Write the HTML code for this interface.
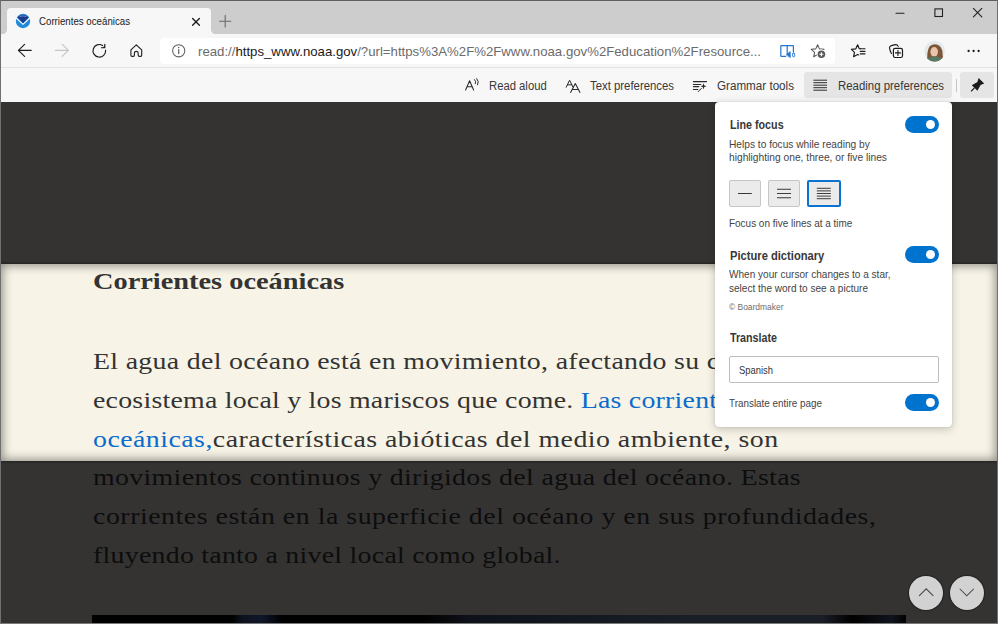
<!DOCTYPE html>
<html><head><meta charset="utf-8">
<style>
*{box-sizing:border-box;margin:0;padding:0}
html,body{width:998px;height:624px;overflow:hidden;background:#cccccc;font-family:"Liberation Sans",sans-serif}
.a{position:absolute}
.t{position:absolute;white-space:nowrap;transform-origin:0 0}
#frame{position:absolute;left:0;top:0;width:998px;height:624px;border:1px solid #5f5f5f;border-left-color:#707070;border-right-color:#707070;border-bottom-color:#7a7a7a;z-index:50}
#tabstrip{left:1px;top:1px;width:996px;height:33px;background:#cdcdcd}
#tab{left:7px;top:8px;width:204px;height:27px;background:#f7f7f7;border-radius:4px 4px 0 0}
#toolbar{left:1px;top:34px;width:996px;height:34px;background:#f7f7f7}
#addr{left:160px;top:38px;width:675px;height:26px;background:#fff;border-radius:4px}
#sep1{left:1px;top:67px;width:996px;height:1px;background:#e3e3e3}
#readbar{left:1px;top:68px;width:996px;height:34px;background:#f7f7f7}
#rpsel{left:804px;top:72px;width:148px;height:26px;background:#e5e5e5;border-radius:3px}
#pinsel{left:960px;top:72px;width:34px;height:26px;background:#e5e5e5;border-radius:3px}
#vsep{left:956px;top:79px;width:1px;height:13px;background:#c4c4c4}
#content{left:1px;top:102px;width:996px;height:521px;background:#f7f3e6}
.dim{position:absolute;left:1px;width:996px;background:rgba(4,4,5,0.805)}
#band{left:1px;top:264px;width:996px;height:197px;box-shadow:inset 0 0 10px 2px rgba(0,0,0,0.40),0 0 2px 1px rgba(0,0,0,0.35)}
#panel{left:715px;top:102px;width:237px;height:325px;background:#fff;border-radius:4px;box-shadow:0 0 1px rgba(0,0,0,0.25),0 2px 9px rgba(0,0,0,0.22)}
.toggle{position:absolute;width:34px;height:17px;border-radius:9px;background:#0073cf}
.toggle:after{content:"";position:absolute;left:21px;top:4px;width:9px;height:9px;border-radius:50%;background:#fff}
.lfbtn{position:absolute;top:180px;width:32px;height:27px;background:#ebebeb;border:1px solid #c6c6c6;border-radius:2px}
.circ{position:absolute;top:575.7px;width:34px;height:34px;border-radius:50%;background:#d2d2d2;box-shadow:0 0 1px 1px rgba(0,0,0,0.35)}
</style></head><body>
<div class="a" id="tabstrip"></div>
<div class="a" id="tab"></div>
<div class="a" style="left:3px;top:30px;width:4px;height:4px;background:radial-gradient(circle at 0 0,#cdcdcd 3.5px,#f7f7f7 4.2px)"></div>
<div class="a" style="left:211px;top:30px;width:4px;height:4px;background:radial-gradient(circle at 100% 0,#cdcdcd 3.5px,#f7f7f7 4.2px)"></div>
<div class="a" id="toolbar"></div>
<div class="a" id="addr"></div>
<div class="a" id="sep1"></div>
<div class="a" id="readbar"></div>
<div class="a" id="rpsel"></div>
<div class="a" id="pinsel"></div>
<div class="a" id="vsep"></div>
<svg class="a" style="left:0;top:0" width="998" height="102" viewBox="0 0 998 102" fill="none" stroke-linecap="round" stroke-linejoin="round">
<!-- NOAA logo -->
<circle cx="23" cy="21" r="7.2" fill="#1f8bdb"/>
<path d="M17.4 17.2 Q23 12.2 28.6 17.2 L23 23.4 Z" fill="#1c3b8e"/>
<path d="M16.3 18 L23 24.3 L29.7 18" stroke="#fff" stroke-width="1.05"/>
<path d="M20 16.4 Q23 15.3 26 16.4" stroke="#7f98d0" stroke-width="0.8"/>
<!-- tab close -->
<path d="M192.6 18.4 L199.4 25.2 M199.4 18.4 L192.6 25.2" stroke="#1c1c1c" stroke-width="1.35"/>
<!-- new tab plus -->
<path d="M219.6 21.2 H230.8 M225.2 15.4 V27" stroke="#6a6a6a" stroke-width="1.1"/>
<!-- window controls -->
<path d="M896 13.3 H904" stroke="#222" stroke-width="1.1"/>
<rect x="934.9" y="8.9" width="7.6" height="7.6" stroke="#222" stroke-width="1.1" stroke-linejoin="miter"/>
<path d="M973.4 8.4 L981.8 16.8 M981.8 8.4 L973.4 16.8" stroke="#222" stroke-width="1.1"/>
<!-- back / forward -->
<path d="M31.2 50.4 H18.4 M24.6 44.3 L18.4 50.4 L24.6 56.4" stroke="#1b1b1b" stroke-width="1.15"/>
<path d="M55.4 50.4 H68.4 M62.2 44.3 L68.4 50.4 L62.2 56.4" stroke="#c6c6c6" stroke-width="1.15"/>
<!-- reload -->
<path d="M105.6 50.2 A6.3 6.3 0 1 1 102.6 45.4" stroke="#1b1b1b" stroke-width="1.15"/>
<path d="M101.4 47.7 H104.8 V44.3" stroke="#1b1b1b" stroke-width="1.15"/>
<path d="M104.8 45.6 V47.7 H102.6 Z" fill="#1b1b1b"/>
<!-- home -->
<path d="M130.9 49.8 L136.3 44.8 L141.7 49.8 V55.2 Q141.7 56.3 140.6 56.3 H139.3 Q138.2 56.3 138.2 55.2 V53.2 A1.9 1.9 0 0 0 134.4 53.2 V55.2 Q134.4 56.3 133.3 56.3 H132 Q130.9 56.3 130.9 55.2 Z" stroke="#222" stroke-width="1.15"/>
<!-- info -->
<circle cx="178.7" cy="50.75" r="6.1" stroke="#5f5f5f" stroke-width="1.05"/>
<path d="M178.7 49.7 V53.6" stroke="#5f5f5f" stroke-width="1.2"/>
<circle cx="178.7" cy="47.6" r="0.75" fill="#5f5f5f"/>
<!-- immersive reader -->
<path d="M786.6 45.6 H781.4 Q780.8 45.6 780.8 46.2 V55.8 Q780.8 56.4 781.4 56.4 H785.6" stroke="#1f74d4" stroke-width="1.2"/>
<path d="M787.2 45.6 V53.4 M787.2 45.6 H792.8 Q793.4 45.6 793.4 46.2 V51.6" stroke="#1f74d4" stroke-width="1.2"/>
<path d="M786.4 54.6 L790.3 51.6 V57.4 Z" fill="#1f74d4" stroke="#1f74d4" stroke-width="0.6"/>
<rect x="792.5" y="52.9" width="2.2" height="4" rx="1.1" stroke="#1f74d4" stroke-width="0.9"/>
<!-- star plus -->
<path d="M817.60 44.70 L819.42 48.89 L823.97 49.33 L820.55 52.36 L821.54 56.82 L817.60 54.50 L813.66 56.82 L814.65 52.36 L811.23 49.33 L815.78 48.89 Z" stroke="#5a5a5a" stroke-width="1.05"/>
<circle cx="821.4" cy="54.3" r="4.8" fill="#fff"/>
<circle cx="821.4" cy="54.3" r="3.8" fill="#5a5a5a"/>
<path d="M821.4 52.3 V56.3 M819.4 54.3 H823.4" stroke="#fff" stroke-width="1.1" stroke-linecap="butt"/>
<!-- favorites -->
<path d="M860.4 48.7 L859.3 48.8 L857.6 44.8 L855.7 48.9 L851.4 49.4 L854.5 52.4 L853.6 56.7 L857.5 54.4 L858.7 55" stroke="#1b1b1b" stroke-width="1.15"/>
<path d="M860.6 48.7 H865 M860.3 51.4 H865 M860.3 53.8 H865" stroke="#1b1b1b" stroke-width="1.15"/>
<!-- collections -->
<path d="M891.4 53.6 Q889.7 50.2 889.5 47.8 Q889.4 46.5 890.7 45.9 Q893.2 44.9 895.6 44.6 Q897.4 44.4 898.2 46.4" stroke="#1b1b1b" stroke-width="1.15"/>
<rect x="893.4" y="48.3" width="9.1" height="9.2" rx="1.8" stroke="#1b1b1b" stroke-width="1.2"/>
<path d="M897.95 50.4 V55.4 M895.4 52.9 H900.5" stroke="#1b1b1b" stroke-width="1.1"/>
<!-- avatar -->
<defs><clipPath id="av"><circle cx="934.6" cy="51.1" r="10.4"/></clipPath></defs>
<g clip-path="url(#av)">
<rect x="924" y="40" width="22" height="22" fill="#e4eaec"/>
<path d="M927.5 62 Q926.5 51 929.5 46.5 Q934 42.6 939 45.6 Q943 49 942.6 55 Q943 59 945 62 Z" fill="#7d5538"/>
<ellipse cx="934.2" cy="51.8" rx="3.8" ry="4.8" fill="#e9c3aa"/>
<path d="M924.5 62 Q927 56.2 934.4 56.4 Q941.5 56.4 944.6 62 Z" fill="#547a66"/>
</g>
<!-- more -->
<circle cx="968.6" cy="51" r="1.15" fill="#1b1b1b"/>
<circle cx="973.6" cy="51" r="1.15" fill="#1b1b1b"/>
<circle cx="978.6" cy="51" r="1.15" fill="#1b1b1b"/>
<!-- read aloud icon -->
<path d="M465.6 90 L469.6 80.8 L473.6 90 M467 86.8 H472.2" stroke="#2a2a2a" stroke-width="1.05"/>
<path d="M474.6 79.6 Q476.4 81.4 475.4 83.6 M476.8 78.6 Q479.4 81.6 477.6 84.8" stroke="#2a2a2a" stroke-width="1"/>
<!-- text prefs icon -->
<path d="M566.2 87.2 L569.6 80.2 L573 87.2 M567.4 84.8 H571.8" stroke="#2a2a2a" stroke-width="1"/>
<path d="M570.6 92.4 L575.3 83.6 L580 92.4 M572.2 89.4 H578.4" stroke="#2a2a2a" stroke-width="1.05"/>
<!-- grammar icon -->
<path d="M693.4 81.6 H706.6 M693.4 84.4 H700.8 M693.4 86.6 H698.8 M693.4 89.4 H697.8" stroke="#2a2a2a" stroke-width="1.05"/>
<path d="M703.5 83.2 L704.3 85.5 L706.6 86.3 L704.3 87.1 L703.5 89.4 L702.7 87.1 L700.4 86.3 L702.7 85.5 Z" fill="#2a2a2a"/>
<path d="M698.2 91.6 L701.4 88.4" stroke="#2a2a2a" stroke-width="1"/>
<!-- reading prefs icon -->
<path d="M813.4 80.2 H827 M813.4 82.7 H827 M813.4 85.2 H827 M813.4 87.7 H827 M813.4 90.2 H827" stroke="#2e2e2e" stroke-width="1" stroke-linecap="butt"/>
<!-- pin -->
<path d="M978.6 78 L984.2 83.6 L980.6 85 L977.4 90.8 L971.8 85.2 L977.4 82 Z" fill="#1b1b1b"/>
<path d="M974.2 88.2 L971.4 91" stroke="#1b1b1b" stroke-width="1.1"/>
</svg>

<div class="t" style="left:38.70px;top:15.59px;font-family:'Liberation Sans',sans-serif;font-weight:400;font-size:11px;line-height:11px;color:#1a1a1a;letter-spacing:0px;transform:scaleX(0.8806);">Corrientes oceánicas</div>
<div class="t" style="left:198.00px;top:45.00px;font-family:'Liberation Sans',sans-serif;font-weight:400;font-size:13px;line-height:13px;color:#6b6b6b;letter-spacing:0px;transform:scaleX(1.0151);"><span style="color:#6b6b6b">read://</span><span style="color:#1a1a1a">https_www.noaa.gov</span><span style="color:#6b6b6b">/?url=https%3A%2F%2Fwww.noaa.gov%2Feducation%2Fresource...</span></div>
<div class="t" style="left:489.10px;top:79.54px;font-family:'Liberation Sans',sans-serif;font-weight:400;font-size:12px;line-height:12px;color:#383838;letter-spacing:0px;transform:scaleX(0.9399);">Read aloud</div>
<div class="t" style="left:590.10px;top:79.54px;font-family:'Liberation Sans',sans-serif;font-weight:400;font-size:12px;line-height:12px;color:#383838;letter-spacing:0px;transform:scaleX(0.9468);">Text preferences</div>
<div class="t" style="left:717.00px;top:79.54px;font-family:'Liberation Sans',sans-serif;font-weight:400;font-size:12px;line-height:12px;color:#383838;letter-spacing:0px;transform:scaleX(0.9703);">Grammar tools</div>
<div class="t" style="left:837.60px;top:79.54px;font-family:'Liberation Sans',sans-serif;font-weight:400;font-size:12px;line-height:12px;color:#383838;letter-spacing:0px;transform:scaleX(0.9515);">Reading preferences</div>
<div class="a" id="content"></div>
<div class="t" style="left:93.00px;top:269.10px;font-family:'Liberation Serif',serif;font-weight:700;font-size:24px;line-height:24px;color:#333333;letter-spacing:0px;transform:scaleX(1.1815);">Corrientes oceánicas</div>
<div class="t" style="left:93.00px;top:348.80px;font-family:'Liberation Serif',serif;font-weight:400;font-size:24px;line-height:24px;color:#333333;letter-spacing:0.282px;transform:scaleX(1.0000);transform:scaleX(1.16)">El agua del océano está en movimiento, afectando su clima, su</div>
<div class="t" style="left:93.00px;top:387.65px;font-family:'Liberation Serif',serif;font-weight:400;font-size:24px;line-height:24px;color:#333333;letter-spacing:0.204px;transform:scaleX(1.0000);transform:scaleX(1.16)">ecosistema local y los mariscos que come. <span style="color:#0a6ccc">Las corrientes</span></div>
<div class="t" style="left:93.00px;top:426.50px;font-family:'Liberation Serif',serif;font-weight:400;font-size:24px;line-height:24px;color:#333333;letter-spacing:0.405px;transform:scaleX(1.0000);transform:scaleX(1.16)"><span style="color:#0a6ccc">oceánicas,</span>características abióticas del medio ambiente, son</div>
<div class="t" style="left:93.00px;top:465.35px;font-family:'Liberation Serif',serif;font-weight:400;font-size:24px;line-height:24px;color:#333333;letter-spacing:0.297px;transform:scaleX(1.0000);transform:scaleX(1.16)">movimientos continuos y dirigidos del agua del océano. Estas</div>
<div class="t" style="left:93.00px;top:504.20px;font-family:'Liberation Serif',serif;font-weight:400;font-size:24px;line-height:24px;color:#333333;letter-spacing:0.455px;transform:scaleX(1.0000);transform:scaleX(1.16)">corrientes están en la superficie del océano y en sus profundidades,</div>
<div class="t" style="left:93.00px;top:543.05px;font-family:'Liberation Serif',serif;font-weight:400;font-size:24px;line-height:24px;color:#333333;letter-spacing:0.228px;transform:scaleX(1.0000);transform:scaleX(1.16)">fluyendo tanto a nivel local como global.</div>
<div class="dim" style="top:102px;height:162px"></div>
<div class="dim" style="top:461px;height:162px"></div>
<div class="a" id="band"></div>
<div class="a" id="img" style="left:92px;top:615px;width:814px;height:8px;background:linear-gradient(90deg,#000 0,#000 140px,#0d1220 150px,#101729 170px,#000 190px,#000 330px,#0e121a 380px,#1a1e27 600px,#1a1e27 730px,#000 760px,#10141c 800px,#000 814px)"></div>
<div class="circ" style="left:909px"></div>
<div class="circ" style="left:950px"></div>
<div class="a" id="panel"></div>
<div class="toggle" style="left:905px;top:116px"></div>
<div class="toggle" style="left:905px;top:246px"></div>
<div class="toggle" style="left:905px;top:394px"></div>
<div class="lfbtn" style="left:729px"></div>
<div class="lfbtn" style="left:768px"></div>
<div class="lfbtn" style="left:807px;width:34px;border:2px solid #0a72d1"></div>
<div class="a" style="left:729px;top:356px;width:210px;height:27px;border:1px solid #bdbdbd;border-radius:2px;background:#fff"></div>
<div class="t" style="left:729.50px;top:119.12px;font-family:'Liberation Sans',sans-serif;font-weight:700;font-size:12.5px;line-height:12.5px;color:#383838;letter-spacing:0px;transform:scaleX(0.8574);">Line focus</div>
<div class="t" style="left:729.00px;top:139.11px;font-family:'Liberation Sans',sans-serif;font-weight:400;font-size:10.5px;line-height:10.5px;color:#444444;letter-spacing:0px;transform:scaleX(0.9687);">Helps to focus while reading by</div>
<div class="t" style="left:729.00px;top:151.61px;font-family:'Liberation Sans',sans-serif;font-weight:400;font-size:10.5px;line-height:10.5px;color:#444444;letter-spacing:0px;transform:scaleX(0.9736);">highlighting one, three, or five lines</div>
<div class="t" style="left:729.00px;top:217.81px;font-family:'Liberation Sans',sans-serif;font-weight:400;font-size:10.5px;line-height:10.5px;color:#444444;letter-spacing:0px;transform:scaleX(0.9481);">Focus on five lines at a time</div>
<div class="t" style="left:729.50px;top:249.62px;font-family:'Liberation Sans',sans-serif;font-weight:700;font-size:12.5px;line-height:12.5px;color:#383838;letter-spacing:0px;transform:scaleX(0.8930);">Picture dictionary</div>
<div class="t" style="left:729.00px;top:269.01px;font-family:'Liberation Sans',sans-serif;font-weight:400;font-size:10.5px;line-height:10.5px;color:#444444;letter-spacing:0px;transform:scaleX(0.9581);">When your cursor changes to a star,</div>
<div class="t" style="left:729.00px;top:282.51px;font-family:'Liberation Sans',sans-serif;font-weight:400;font-size:10.5px;line-height:10.5px;color:#444444;letter-spacing:0px;transform:scaleX(0.9564);">select the word to see a picture</div>
<div class="t" style="left:729.00px;top:302.68px;font-family:'Liberation Sans',sans-serif;font-weight:400;font-size:9px;line-height:9px;color:#6e6e6e;letter-spacing:0px;transform:scaleX(0.9371);">© Boardmaker</div>
<div class="t" style="left:729.50px;top:332.22px;font-family:'Liberation Sans',sans-serif;font-weight:700;font-size:12.5px;line-height:12.5px;color:#383838;letter-spacing:0px;transform:scaleX(0.8562);">Translate</div>
<div class="t" style="left:739.20px;top:365.41px;font-family:'Liberation Sans',sans-serif;font-weight:400;font-size:10.5px;line-height:10.5px;color:#333333;letter-spacing:0px;transform:scaleX(0.8958);">Spanish</div>
<div class="t" style="left:729.00px;top:397.91px;font-family:'Liberation Sans',sans-serif;font-weight:400;font-size:10.5px;line-height:10.5px;color:#444444;letter-spacing:0px;transform:scaleX(0.9409);">Translate entire page</div>
<svg class="a" style="left:0;top:0;z-index:20" width="998" height="624" viewBox="0 0 998 624" fill="none" stroke-linecap="butt">
<path d="M738 193.5 H751.8" stroke="#3a3a3a" stroke-width="1.05"/>
<path d="M777 189.3 H791 M777 193.5 H791 M777 197.7 H791" stroke="#3a3a3a" stroke-width="1.05"/>
<path d="M816.8 188.3 H830.8 M816.8 190.9 H830.8 M816.8 193.5 H830.8 M816.8 196.1 H830.8 M816.8 198.7 H830.8" stroke="#3a3a3a" stroke-width="1"/>
<path d="M919.4 595.6 L926.2 588.8 L933 595.6" stroke="#474747" stroke-width="1.05" stroke-linecap="round"/>
<path d="M960 589 L966.8 595.8 L973.6 589" stroke="#474747" stroke-width="1.05" stroke-linecap="round"/>
</svg>

<div id="frame" class="a"></div>
</body></html>
